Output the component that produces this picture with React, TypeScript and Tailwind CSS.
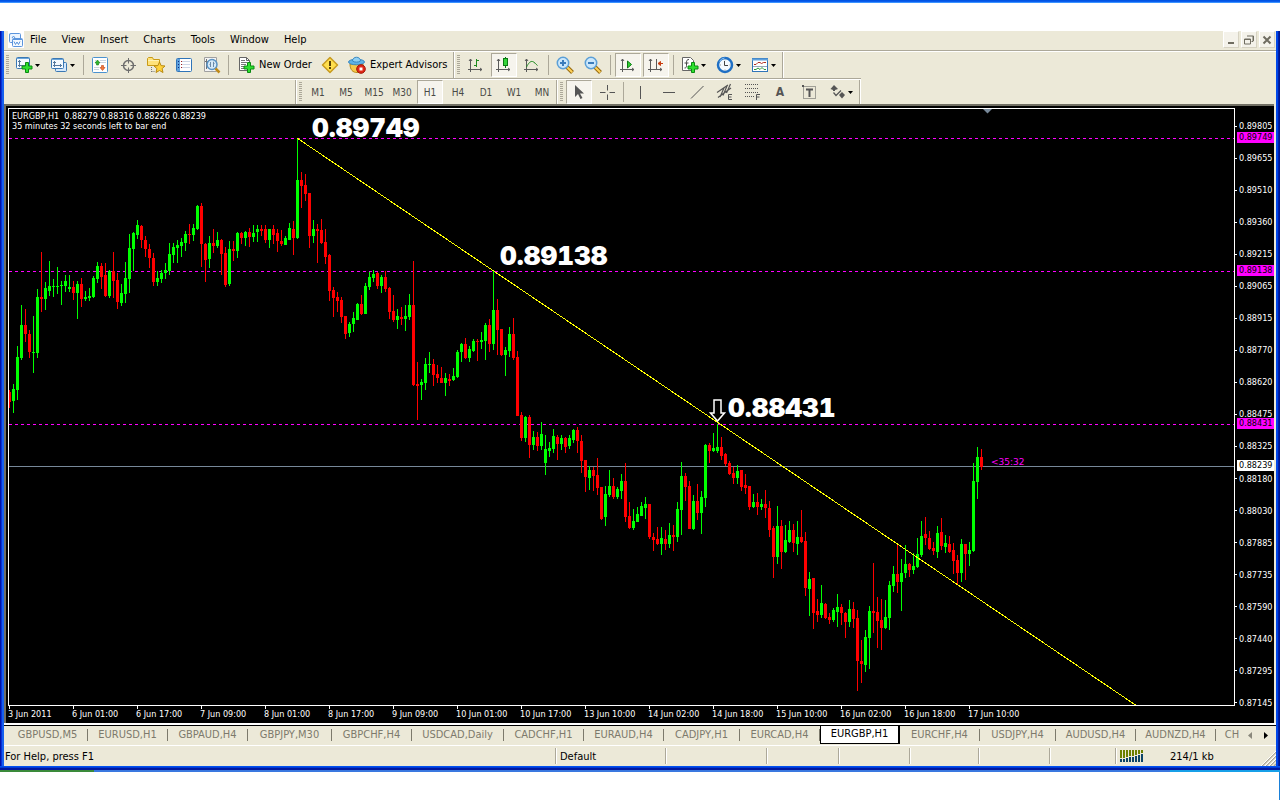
import { useState } from 'react'
import type { ReactNode } from 'react'

// [rising, high, bodyTop, bodyBottom, low] in chart pixels
type Candle = [number, number, number, number, number]

const CANDLES: Candle[] = [
  [0, 390, 392, 402, 408], [1, 384, 389, 401, 413], [1, 346, 357, 390, 400], [1, 305, 325, 358, 360], [0, 309, 325, 334, 342],
  [0, 330, 334, 352, 358], [1, 316, 352, 353, 373], [1, 289, 297, 353, 358], [0, 252, 297, 299, 312], [1, 282, 288, 299, 310],
  [1, 261, 286, 291, 296], [1, 279, 286, 287, 297], [1, 267, 286, 287, 294], [1, 281, 285, 286, 305], [1, 275, 281, 286, 292],
  [1, 275, 287, 289, 292], [0, 281, 287, 293, 300], [1, 281, 284, 293, 319], [0, 278, 284, 299, 307], [1, 291, 297, 299, 301],
  [1, 288, 296, 298, 301], [1, 276, 278, 297, 298], [1, 262, 266, 279, 283], [0, 263, 266, 277, 289], [0, 263, 275, 296, 297],
  [1, 270, 271, 296, 298], [0, 252, 271, 281, 298], [0, 273, 280, 302, 309], [1, 284, 293, 303, 306], [1, 262, 278, 294, 303],
  [1, 234, 248, 279, 293], [1, 232, 233, 249, 271], [1, 220, 225, 235, 239], [0, 225, 226, 240, 248], [0, 236, 240, 249, 257],
  [0, 244, 249, 258, 268], [0, 253, 258, 282, 286], [1, 271, 278, 282, 286], [1, 270, 273, 279, 283], [1, 263, 270, 273, 279],
  [1, 243, 254, 271, 275], [1, 243, 247, 255, 263], [1, 240, 245, 248, 263], [1, 238, 242, 246, 257], [1, 231, 234, 243, 251],
  [0, 224, 234, 235, 244], [1, 224, 228, 235, 241], [1, 205, 206, 229, 230], [0, 203, 206, 244, 267], [0, 243, 244, 260, 282],
  [1, 236, 243, 259, 268], [0, 229, 243, 246, 253], [1, 232, 240, 246, 248], [0, 239, 240, 254, 275], [0, 247, 253, 285, 287],
  [1, 241, 249, 284, 286], [0, 241, 249, 251, 261], [1, 232, 233, 251, 258], [0, 232, 233, 238, 244], [1, 231, 232, 238, 246],
  [0, 228, 232, 237, 247], [1, 225, 233, 237, 242], [1, 225, 229, 232, 242], [0, 225, 229, 231, 236], [0, 225, 229, 240, 243],
  [1, 229, 229, 240, 248], [0, 225, 229, 235, 244], [0, 229, 233, 241, 252], [0, 230, 241, 244, 246], [1, 236, 238, 245, 245],
  [1, 223, 228, 240, 240], [0, 221, 229, 238, 255], [1, 138, 180, 238, 239], [0, 172, 180, 186, 208], [0, 174, 185, 194, 201],
  [0, 193, 193, 236, 248], [1, 220, 229, 236, 243], [0, 224, 229, 231, 263], [0, 219, 230, 243, 244], [0, 229, 242, 257, 264],
  [0, 254, 255, 291, 301], [0, 287, 290, 298, 317], [0, 292, 297, 301, 312], [0, 297, 300, 317, 323], [0, 316, 316, 334, 339],
  [1, 322, 324, 333, 337], [1, 312, 318, 324, 332], [1, 303, 304, 320, 320], [0, 295, 304, 314, 315], [1, 283, 286, 314, 314],
  [1, 272, 277, 287, 290], [1, 270, 274, 278, 282], [0, 272, 273, 286, 289], [1, 275, 277, 286, 293], [0, 271, 277, 289, 292],
  [0, 287, 288, 312, 319], [0, 295, 311, 320, 322], [1, 309, 316, 320, 329], [0, 307, 317, 319, 325], [1, 305, 316, 319, 331],
  [1, 294, 305, 317, 320], [0, 261, 305, 385, 386], [0, 362, 384, 386, 420], [1, 379, 382, 385, 400], [1, 358, 364, 383, 390],
  [1, 352, 364, 365, 373], [0, 359, 364, 375, 386], [0, 365, 374, 378, 383], [0, 367, 378, 383, 383], [1, 373, 378, 383, 396],
  [0, 374, 379, 381, 386], [1, 368, 376, 380, 381], [1, 350, 352, 377, 378], [1, 343, 344, 352, 362], [0, 338, 344, 358, 359],
  [1, 346, 349, 358, 362], [1, 339, 341, 351, 352], [0, 339, 341, 342, 361], [1, 332, 340, 342, 349], [1, 323, 325, 341, 360],
  [0, 319, 325, 344, 352], [1, 271, 310, 344, 350], [0, 299, 310, 330, 355], [0, 329, 329, 355, 356], [1, 347, 350, 355, 376],
  [1, 327, 334, 351, 357], [0, 318, 334, 358, 360], [0, 351, 357, 416, 416], [0, 412, 415, 438, 441], [1, 416, 417, 438, 442],
  [0, 415, 417, 445, 458], [1, 431, 437, 445, 450], [0, 432, 437, 446, 451], [1, 422, 434, 446, 450], [1, 435, 449, 463, 475],
  [1, 442, 448, 451, 457], [1, 429, 436, 449, 453], [0, 435, 437, 444, 460], [1, 435, 438, 444, 450], [0, 437, 438, 447, 453],
  [1, 435, 438, 446, 449], [1, 429, 430, 440, 443], [0, 427, 430, 441, 453], [0, 435, 441, 461, 473], [0, 460, 460, 477, 492],
  [1, 466, 470, 478, 490], [0, 467, 470, 476, 491], [0, 458, 475, 488, 495], [0, 487, 487, 519, 520], [1, 486, 494, 517, 526],
  [1, 470, 486, 495, 497], [0, 478, 486, 497, 499], [1, 487, 489, 497, 499], [1, 474, 481, 491, 499], [0, 463, 481, 517, 522],
  [0, 502, 516, 528, 529], [1, 509, 521, 528, 530], [1, 507, 514, 522, 522], [1, 502, 506, 516, 516], [1, 497, 504, 508, 519],
  [0, 504, 504, 537, 539], [0, 533, 537, 540, 551], [0, 527, 539, 544, 545], [1, 527, 538, 544, 555], [0, 530, 539, 544, 550],
  [1, 523, 535, 544, 548], [0, 525, 535, 537, 551], [1, 502, 509, 537, 542], [1, 462, 476, 510, 535], [0, 473, 476, 487, 501],
  [0, 481, 486, 529, 529], [1, 495, 501, 529, 530], [0, 484, 501, 513, 520], [1, 491, 497, 513, 534], [1, 444, 445, 498, 507],
  [0, 443, 445, 451, 463], [1, 433, 448, 451, 452], [1, 424, 447, 451, 453], [0, 437, 447, 456, 460], [0, 453, 454, 464, 466],
  [0, 461, 463, 474, 475], [0, 467, 473, 478, 484], [1, 465, 471, 478, 484], [0, 470, 470, 487, 491], [0, 474, 485, 488, 494],
  [0, 486, 486, 507, 510], [1, 494, 502, 507, 508], [0, 493, 502, 507, 515], [1, 499, 504, 507, 510], [0, 490, 504, 508, 518],
  [0, 501, 508, 530, 537], [0, 526, 528, 557, 578], [1, 506, 526, 557, 564], [0, 520, 526, 552, 569], [1, 525, 540, 552, 553],
  [1, 521, 530, 542, 543], [0, 524, 530, 543, 552], [1, 521, 537, 544, 555], [0, 510, 537, 542, 543], [0, 532, 541, 588, 596],
  [1, 572, 579, 589, 616], [0, 578, 578, 613, 629], [0, 599, 611, 615, 622], [1, 585, 603, 615, 618], [0, 603, 604, 618, 619],
  [0, 613, 617, 620, 624], [1, 608, 610, 620, 622], [1, 594, 607, 612, 627], [0, 604, 607, 613, 625], [0, 612, 613, 622, 638],
  [1, 600, 609, 622, 627], [0, 602, 609, 619, 628], [0, 610, 618, 661, 691], [0, 640, 661, 664, 683], [1, 630, 637, 665, 672],
  [1, 606, 611, 638, 669], [0, 563, 611, 613, 633], [0, 597, 612, 621, 648], [0, 599, 620, 628, 650], [1, 600, 617, 628, 629],
  [1, 581, 585, 618, 630], [1, 566, 574, 586, 592], [0, 543, 574, 582, 593], [1, 559, 573, 582, 611], [1, 545, 564, 573, 578],
  [0, 563, 564, 570, 577], [1, 553, 566, 570, 574], [1, 538, 554, 567, 568], [1, 521, 536, 555, 557], [0, 517, 534, 538, 545],
  [0, 531, 538, 549, 550], [0, 542, 548, 551, 555], [1, 526, 533, 552, 558], [0, 518, 532, 546, 550], [1, 535, 543, 547, 553],
  [0, 536, 544, 552, 553], [0, 543, 550, 561, 574], [0, 555, 560, 573, 584], [1, 539, 544, 573, 582], [0, 544, 544, 554, 580],
  [1, 542, 550, 554, 566], [1, 463, 481, 551, 552], [1, 447, 457, 482, 499], [0, 449, 457, 467, 470],
]

const PLOT_TOP = 109

const PRICES = [
  '0.89805', '0.89655', '0.89510', '0.89360', '0.89215', '0.89065', '0.88915', '0.88770', '0.88620', '0.88475',
  '0.88325', '0.88180', '0.88030', '0.87885', '0.87735', '0.87590', '0.87440', '0.87295', '0.87145',
]

const TIMES = [
  '3 Jun 2011', '6 Jun 01:00', '6 Jun 17:00', '7 Jun 09:00', '8 Jun 01:00', '8 Jun 17:00', '9 Jun 09:00', '10 Jun 01:00',
  '10 Jun 17:00', '13 Jun 10:00', '14 Jun 02:00', '14 Jun 18:00', '15 Jun 10:00', '16 Jun 02:00', '16 Jun 18:00', '17 Jun 10:00',
]

const TABS = [
  { name: 'GBPUSD,M5', width: 'w-20' },
  { name: 'EURUSD,H1', width: 'w-20' },
  { name: 'GBPAUD,H4', width: 'w-20' },
  { name: 'GBPJPY,M30', width: 'w-[84px]' },
  { name: 'GBPCHF,H4', width: 'w-20' },
  { name: 'USDCAD,Daily', width: 'w-[92px]' },
  { name: 'CADCHF,H1', width: 'w-20' },
  { name: 'EURAUD,H4', width: 'w-20' },
  { name: 'CADJPY,H1', width: 'w-[76px]' },
  { name: 'EURCAD,H4', width: 'w-20' },
  { name: 'EURGBP,H1', width: 'w-20' },
  { name: 'EURCHF,H4', width: 'w-20' },
  { name: 'USDJPY,H4', width: 'w-[76px]' },
  { name: 'AUDUSD,H4', width: 'w-20' },
  { name: 'AUDNZD,H4', width: 'w-20' },
]

const TIMEFRAMES = ['M1', 'M5', 'M15', 'M30', 'H1', 'H4', 'D1', 'W1', 'MN']

function Icon({ children, size = 18 }: { children: ReactNode; size?: number }) {
  return (
    <svg width={size} height={size} viewBox={`0 0 ${size} ${size}`} fill="none" className="shrink-0" aria-hidden="true">
      {children}
    </svg>
  )
}

function GreenPlus() {
  return (
    <path d="M10.500 6.500h3v3.500h3.500v3h-3.500v3.500h-3v-3.500H7v-3h3.500z" fill="#2fe02f" stroke="#0a8a12" />
  )
}

function Axes() {
  return (
    <path d="M3.500 3v13M1 13.500h14M2 5l1.500-2L5 5M13 12l2 1.500L13 15" stroke="#5a5a5a" />
  )
}

function NewChartIcon() {
  return (
    <Icon>
      <rect x="1.500" y="1.500" width="13" height="11" rx="1" fill="#f4faff" stroke="#3a78b4" />
      <path d="M2 2.500h12" stroke="#6aa5da" />
      <path d="M4.500 4v7M3 9.500h8M3 5.500h3" stroke="#55789c" />
      <GreenPlus />
    </Icon>
  )
}

function ProfilesIcon() {
  return (
    <Icon>
      <rect x="5.500" y="6.500" width="11" height="9" rx="1" fill="#d5e8fa" stroke="#3a78b4" />
      <rect x="1.500" y="2.500" width="12" height="10" rx="1" fill="#f4faff" stroke="#3a78b4" />
      <path d="M2 3.500h11" stroke="#6aa5da" />
      <path d="M4.500 5v6M3 9.500h9M3 6.500h3M10.500 8v3" stroke="#55789c" />
    </Icon>
  )
}

function MarketWatchIcon() {
  return (
    <Icon>
      <rect x="1.500" y="1.500" width="15" height="15" rx="1" fill="#fff" stroke="#4b92cf" />
      <path d="M4 4.500h1M9 6.500h6M9 4.500h6M3 11.500h5M3 13.500h5" stroke="#c8d4e0" />
      <path d="M6.500 4l2.500 3H7.500v2h-2V7H4z" fill="#2fb62f" stroke="#148014" strokeWidth=".6" />
      <path d="M11.500 14.500l2.500-3h-1.500v-2h-2v2H9z" fill="#f07a3c" stroke="#c03c10" strokeWidth=".6" />
    </Icon>
  )
}

function DataWindowIcon() {
  return (
    <Icon>
      <circle cx="9.500" cy="9.500" r="5" stroke="#6e6e6e" strokeWidth="1.500" />
      <path d="M9.500 2v5.500M9.500 11.500v5.500M2 9.500h5.500M11.500 9.500h5.500" stroke="#6e6e6e" />
    </Icon>
  )
}

function NavigatorIcon() {
  return (
    <Icon>
      <path d="M.5 2.500l1-1h4l1 2h6v6H.5z" fill="#ffe27a" stroke="#c89a18" />
      <path d="M1 4.500h11" stroke="#fff3b8" />
      <path d="M4.500 11v6M4.500 15.500h4" stroke="#777" strokeDasharray="1 1" />
      <path d="M12.500 6l1.600 3.600 3.900.4-2.900 2.600.9 3.900-3.500-2-3.500 2 .9-3.900L7 10l3.900-.4z" fill="#ffd23c" stroke="#b88a10" />
    </Icon>
  )
}

function TerminalIcon() {
  return (
    <Icon>
      <rect x="1.500" y="2.500" width="15" height="13" rx="1" fill="#fff" stroke="#2f74b8" />
      <rect x="2" y="3" width="3" height="12" fill="#5ea0dc" />
      <path d="M3 5.500h1M3 8.500h1M3 11.500h1" stroke="#102a80" />
      <path d="M7 5.500h8M7 8.500h8M7 11.500h8" stroke="#ccd6e6" />
      <path d="M6 5.500h1M6 8.500h1M6 11.500h1" stroke="#a02020" />
    </Icon>
  )
}

function TesterIcon() {
  return (
    <Icon>
      <path d="M1.500 1.500h12v14h-12z" fill="#f4f4f4" stroke="#a0a0a0" />
      <path d="M3.500 3v10M10.500 3v3M2 5.500h3" stroke="#707070" />
      <circle cx="9" cy="8.500" r="5" fill="#cfe6f8" fillOpacity=".85" stroke="#5a93c4" strokeWidth="1.500" />
      <path d="M7.500 6v5M10.500 6v5M6.500 8.500h1M10.500 7.500h1" stroke="#6a8aa8" />
      <path d="M12.500 12.500l4 4" stroke="#c08a18" strokeWidth="2.500" />
    </Icon>
  )
}

function NewOrderIcon() {
  return (
    <Icon>
      <path d="M2.500 1.500h7l3 3v10h-10z" fill="#fff" stroke="#666" />
      <path d="M9.500 1.500v3h3" stroke="#666" />
      <path d="M4 4.500h4M4 6.500h6M4 8.500h5M4 10.500h4M4 12.500h4" stroke="#777" />
      <GreenPlus />
    </Icon>
  )
}

function AlertIcon() {
  return (
    <Icon>
      <path d="M9 1.500L16.500 9 9 16.500 1.500 9z" fill="#ffdf4e" stroke="#c79a20" strokeWidth="1.500" strokeLinejoin="round" />
      <path d="M9 5v5M9 11v2" stroke="#5a4308" strokeWidth="2" />
    </Icon>
  )
}

function ExpertIcon() {
  return (
    <Icon>
      <path d="M2 8c0 6 3 8.500 7 8.500s6-3 6-8.500z" fill="#f6c94a" stroke="#b88818" />
      <ellipse cx="8.500" cy="6" rx="8" ry="2.800" fill="#5fb2e6" stroke="#3a88c0" />
      <path d="M4.500 5c0-5 8-5 8 0-2 1.500-6 1.500-8 0z" fill="#8fd0f4" stroke="#3a88c0" />
      <circle cx="13" cy="13" r="4.300" fill="#e02818" stroke="#a01408" />
      <rect x="11.500" y="11.500" width="3" height="3" fill="#fff" />
    </Icon>
  )
}

function BarsIcon() {
  return (
    <Icon>
      <Axes />
      <path d="M9.500 3v8M7 9.500h2.500M9.500 4.500H12" stroke="#1e8a1e" />
    </Icon>
  )
}

function CandlesIcon() {
  return (
    <Icon>
      <Axes />
      <path d="M10.500 1v11" stroke="#0c7a14" />
      <rect x="8.500" y="2.500" width="4" height="7" fill="#35d43a" stroke="#0c7a14" />
    </Icon>
  )
}

function LineIcon() {
  return (
    <Icon>
      <Axes />
      <path d="M3.500 11c2-4 4-6 6-5.500 2 .5 3 2.500 5 4" stroke="#1e8a1e" />
    </Icon>
  )
}

function ZoomIcon({ plus }: { plus: boolean }) {
  return (
    <Icon>
      <path d="M11 11l5.500 5.500" stroke="#96690c" strokeWidth="4" />
      <path d="M11 11l5.200 5.200" stroke="#ffd25a" strokeWidth="2" />
      <circle cx="7" cy="7" r="5.700" fill="#cbe7fb" stroke="#5b9fd6" strokeWidth="1.500" />
      <path d={plus ? 'M7 4v6M4 7h6' : 'M4 7h6'} stroke="#3a7cbc" strokeWidth="2" />
    </Icon>
  )
}

function AutoScrollIcon() {
  return (
    <Icon>
      <Axes />
      <path d="M8.500 5v7l4-3.500z" fill="#2fd02f" stroke="#0c7a14" />
    </Icon>
  )
}

function ChartShiftIcon() {
  return (
    <Icon>
      <Axes />
      <path d="M9.500 3v10" stroke="#5a5a5a" />
      <path d="M11 7.500h5M13.500 5.500v4L11 7.500z" fill="#c83c10" stroke="#c83c10" />
    </Icon>
  )
}

function IndicatorsIcon() {
  return (
    <Icon>
      <path d="M1.500 1.500h8l3 3v10h-11z" fill="#fff" stroke="#666" />
      <path d="M8 3.500c-2 0-2.500 1-2.500 3v3c0 2-.5 2.500-2 2.500M3.500 7h4" stroke="#444" />
      <GreenPlus />
    </Icon>
  )
}

function ClockIcon() {
  return (
    <Icon>
      <circle cx="9" cy="9" r="7" fill="#f6fbff" stroke="#1f6fc4" strokeWidth="2.500" />
      <path d="M3.500 5.500a6.500 6.500 0 015-3.500" stroke="#8cc4f4" />
      <path d="M8.500 5v4.500H12" stroke="#444" />
      <path d="M9 3.500v.8M9 13.500v1M4 9h1M13.500 9h1" stroke="#999" />
    </Icon>
  )
}

function TemplatesIcon() {
  return (
    <Icon>
      <rect x="1.500" y="2.500" width="15" height="13" fill="#fff" stroke="#2f74b8" />
      <path d="M1 3.500h16" stroke="#5ea0dc" strokeWidth="2" />
      <path d="M3 8.500h2l2-2h2l1.500 1 2-1H15" stroke="#b03020" />
      <path d="M2 10.500h14" stroke="#9ab" />
      <path d="M3 13.500h2l2-1.500 2 1.500 2-2 2 2h2" stroke="#2a9a3a" />
    </Icon>
  )
}

function DropArrow() {
  return (
    <svg width="5" height="3" viewBox="0 0 5 3" className="shrink-0" aria-hidden="true">
      <path d="M0 0h5L2.500 3z" fill="#000" />
    </svg>
  )
}

interface ToolButtonProps {
  label: string
  pressed?: boolean
  onClick?: () => void
  children: ReactNode
}

function ToolButton({ label, pressed = false, onClick, children }: ToolButtonProps) {
  return (
    <button
      type="button"
      aria-label={label}
      aria-pressed={pressed}
      onClick={onClick}
      className={
        pressed
          ? 'mx-px flex h-6 w-[26px] shrink-0 items-center justify-center border border-t-[#aca899] border-r-white border-b-white border-l-[#aca899] bg-[#f6f4ed]'
          : 'flex h-6 w-7 shrink-0 items-center justify-center'
      }
    >
      {children}
    </button>
  )
}

function DropButton({ label, children }: { label: string; children: ReactNode }) {
  return (
    <button type="button" aria-label={label} className="flex h-6 w-[35px] shrink-0 items-center gap-0.5 pl-1">
      {children}
      <DropArrow />
    </button>
  )
}

function Grip() {
  return (
    <div className="flex w-[7px] shrink-0 items-center justify-center">
      <div className="h-5 w-[3px] bg-[repeating-linear-gradient(to_bottom,#aca899_0_1px,transparent_1px_2px)]" />
    </div>
  )
}

function Separator({ wide = false }: { wide?: boolean }) {
  return (
    <div className={`${wide ? 'w-[7px]' : 'w-[5px]'} flex shrink-0 items-center justify-center`}>
      <div className="h-5 w-px bg-[#aca899]" />
    </div>
  )
}

function BandEdge() {
  return <div className="w-0.5 shrink-0 self-stretch border-r border-l border-r-white border-l-[#aca899]" />
}

function MenuBar() {
  return (
    <div className="flex h-[21px] shrink-0 items-start border-b border-[#fff] shadow-[inset_0_-1px_0_#aca899]">
      <div className="ml-1 flex h-[17px] w-4 items-center justify-center bg-white">
        <Icon size={16}>
          <rect x="1.500" y="1.500" width="11" height="9" rx="1" fill="#eaf4ff" stroke="#5a94dc" />
          <path d="M1.500 3l1-1.500M4 6l1.500-2L7 6" stroke="#5a94dc" />
          <rect x="4.500" y="6.500" width="10" height="8" rx="1" fill="#f4faff" stroke="#5a94dc" />
          <path d="M5 7.500h9M6 9.500l1.500 3L9 10l1.500 2.500 1.500-3" stroke="#5a94dc" />
        </Icon>
      </div>
      <nav className="flex h-[18px] items-center gap-[15px] pl-1.5 text-[11px]">
        {['File', 'View', 'Insert', 'Charts', 'Tools', 'Window', 'Help'].map((item) => (
          <button key={item} type="button">
            {item}
          </button>
        ))}
      </nav>
      <div className="ml-auto flex gap-0.5 pr-px">
        {['Minimize', 'Restore', 'Close'].map((name) => (
          <button
            key={name}
            type="button"
            aria-label={name}
            className="flex h-[17px] w-4 items-center justify-center border border-t-white border-r-[#d6d2c2] border-b-[#d6d2c2] border-l-white bg-[#f4f2ea]"
          >
            <Icon size={10}>
              {name === 'Minimize' && <path d="M2 8h6" stroke="#6f6c60" strokeWidth="2" />}
              {name === 'Restore' && (
                <path d="M3 1h6.500V6M9 1v5.500H7.500M.5 4h6v5h-6zM.5 4.500h6" stroke="#6f6c60" />
              )}
              {name === 'Close' && <path d="M1.500 1.500l7 7M8.500 1.500l-7 7" stroke="#6f6c60" strokeWidth="2" />}
            </Icon>
          </button>
        ))}
      </div>
    </div>
  )
}

function StandardToolbar() {
  return (
    <div className="flex h-[27px] shrink-0">
      <div className="flex w-[857px] items-center border-b border-[#aca899]">
        <Grip />
        <DropButton label="New chart"><NewChartIcon /></DropButton>
        <DropButton label="Profiles"><ProfilesIcon /></DropButton>
        <Separator />
        <ToolButton label="Market Watch"><MarketWatchIcon /></ToolButton>
        <ToolButton label="Data Window"><DataWindowIcon /></ToolButton>
        <ToolButton label="Navigator"><NavigatorIcon /></ToolButton>
        <ToolButton label="Terminal"><TerminalIcon /></ToolButton>
        <ToolButton label="Strategy Tester"><TesterIcon /></ToolButton>
        <Separator />
        <button type="button" className="flex h-6 w-[85px] items-center gap-1 pl-1.5 text-[11px] whitespace-nowrap">
          <NewOrderIcon />
          New Order
        </button>
        <ToolButton label="MetaEditor"><AlertIcon /></ToolButton>
        <button type="button" className="flex h-6 w-[109px] items-center gap-1 pl-1 text-[11px] whitespace-nowrap">
          <ExpertIcon />
          Expert Advisors
        </button>
        <BandEdge />
        <Grip />
        <ToolButton label="Bar chart"><BarsIcon /></ToolButton>
        <ToolButton label="Candlesticks" pressed><CandlesIcon /></ToolButton>
        <ToolButton label="Line chart"><LineIcon /></ToolButton>
        <Separator />
        <ToolButton label="Zoom in"><ZoomIcon plus /></ToolButton>
        <ToolButton label="Zoom out"><ZoomIcon plus={false} /></ToolButton>
        <Separator wide />
        <ToolButton label="Auto scroll" pressed><AutoScrollIcon /></ToolButton>
        <ToolButton label="Chart shift" pressed><ChartShiftIcon /></ToolButton>
        <Separator wide />
        <DropButton label="Indicators"><IndicatorsIcon /></DropButton>
        <DropButton label="Periods"><ClockIcon /></DropButton>
        <DropButton label="Templates"><TemplatesIcon /></DropButton>
        <BandEdge />
      </div>
    </div>
  )
}

function DrawingToolbar() {
  const [frame, setFrame] = useState('H1')

  return (
    <div className="flex h-[25px] shrink-0 items-center">
      <div className="flex w-[857px] items-center self-stretch border-t border-white">
        <div className="w-[291px] shrink-0" />
        <BandEdge />
        <Grip />
        {TIMEFRAMES.map((tf) => (
          <ToolButton key={tf} label={tf} pressed={tf === frame} onClick={() => setFrame(tf)}>
            <span className="text-[10px] text-[#4a4a46]">{tf}</span>
          </ToolButton>
        ))}
        <BandEdge />
        <Grip />
        <ToolButton label="Cursor" pressed>
          <Icon>
            <path d="M5 2v12l3-3 2.500 5 2-1-2.500-4.500H14z" fill="#555" />
          </Icon>
        </ToolButton>
        <ToolButton label="Crosshair">
          <Icon>
            <path d="M9.500 2v5.500M9.500 11.500v5.500M2 9.500h5.500M11.500 9.500h5.500" stroke="#555" />
          </Icon>
        </ToolButton>
        <Separator />
        <ToolButton label="Vertical line">
          <Icon><path d="M9.500 3v13" stroke="#555" /></Icon>
        </ToolButton>
        <ToolButton label="Horizontal line">
          <Icon><path d="M4 9.500h12" stroke="#555" /></Icon>
        </ToolButton>
        <ToolButton label="Trendline">
          <Icon><path d="M4 15.500L16.500 3" stroke="#555" /></Icon>
        </ToolButton>
        <ToolButton label="Equidistant channel">
          <Icon>
            <path d="M2 9.500L13 2M3 14.500L16 5M5 14L9 5M8 12.500L12 3M11.500 10L15.500 1" stroke="#555" strokeWidth="1.200" />
            <path d="M17 11.500h-3.500v5H17M13.500 14h3" stroke="#555" />
          </Icon>
        </ToolButton>
        <ToolButton label="Fibonacci retracement">
          <Icon>
            <path d="M2 1.500h14M2 5.500h14M2 9.500h14M2 13.500h9" stroke="#555" strokeDasharray="1 1" />
            <path d="M17 11.500h-3.500V17M13.500 14h3" stroke="#555" />
          </Icon>
        </ToolButton>
        <ToolButton label="Text">
          <span className="text-xs font-bold text-[#555]">A</span>
        </ToolButton>
        <ToolButton label="Text label">
          <Icon>
            <rect x="4.500" y="3.500" width="12" height="12" stroke="#555" strokeDasharray="1 1" />
            <path d="M3 2h2v2H3z" fill="#555" />
            <path d="M7 6.500h7M10.500 6.500V14" stroke="#555" strokeWidth="2" />
          </Icon>
        </ToolButton>
        <div className="ml-auto flex items-center self-stretch">
          <DropButton label="Arrows">
            <Icon>
              <path d="M6 2l4 4-3 1v1H5V7L2.500 6z" fill="#555" />
              <path d="M5.500 9.500l2.500 3 5-5" stroke="#555" strokeWidth="1.200" />
              <path d="M14 9l3 3-3 3.500-3-3.500z" fill="#555" />
            </Icon>
          </DropButton>
          <BandEdge />
        </div>
      </div>
    </div>
  )
}

function PriceLine({ y }: { y: number }) {
  return <line x1="0" x2="100%" y1={y} y2={y} stroke="#ff00ff" strokeDasharray="3 3" shapeRendering="crispEdges" />
}

function Plot() {
  return (
    <svg className="block h-full w-full" role="img" aria-label="EURGBP hourly candlestick chart">
      <PriceLine y={29.5} />
      <PriceLine y={162.5} />
      <PriceLine y={315.5} />
      <line x1="0" x2="100%" y1="357.500" y2="357.500" stroke="#778899" shapeRendering="crispEdges" />

      {/* Candles, one every 4px */}
      <g shapeRendering="crispEdges">
        {CANDLES.map(([up, high, top, bottom, low], i) => {
          const color = up ? '#00ff00' : '#ff0000'
          return (
            <g key={i} fill={color}>
              <rect x={i * 4} y={high - PLOT_TOP} width="1" height={low - high} />
              <rect x={i * 4 - 1} y={top - PLOT_TOP} width="3" height={bottom - top} />
            </g>
          )
        })}
      </g>

      {/* Trend line */}
      <line x1="288" y1="29" x2="1128" y2="597" stroke="#ffff00" shapeRendering="crispEdges" />

      <path d="M974 0h9l-4.500 4.500z" fill="#778899" />
      <path d="M705 291h7v13h3.500L708.500 312 701.500 304H705z" fill="#000" stroke="#fff" strokeWidth="1.500" />

      <g className="fill-white font-['Inter','DejaVu_Sans'] text-[26px] font-black tabular-nums">
        <text x="303" y="28">0.89749</text>
        <text x="491" y="156">0.89138</text>
        <text x="719" y="308">0.88431</text>
      </g>
      <text x="982" y="356" className="fill-[#ff00ff] font-['DejaVu_Sans'] text-[9px]">
        &lt;35:32
      </text>
    </svg>
  )
}

function Chart() {
  return (
    <div className="mr-0.5 flex min-h-0 flex-1 flex-col border-t-2 border-l-2 border-[#716f64] bg-black pt-0.5 pl-0.5 text-[9px] leading-[10px] text-white">
      <div className="flex min-h-0 flex-1">
        <div className="relative min-w-0 flex-1 overflow-hidden border border-white">
          <Plot />
          <div className="absolute top-0.5 left-[3px] whitespace-pre">
            <p>EURGBP,H1  0.88279 0.88316 0.88226 0.88239</p>
            <p>35 minutes 32 seconds left to bar end</p>
          </div>
        </div>
        <div className="relative w-[39px] shrink-0">
          <ul className="flex h-[calc(100%+2px)] flex-col justify-between pt-[13px]">
            {PRICES.map((price) => (
              <li key={price} className="flex h-2.5 items-center gap-0.5">
                <span className="h-px w-0.5 bg-white" />
                {price}
              </li>
            ))}
          </ul>
          <span className="absolute top-6 left-0.5 h-[11px] w-[37px] bg-[#ff00ff] pl-0.5 text-black">0.89749</span>
          <span className="absolute top-[157px] left-0.5 h-[11px] w-[37px] bg-[#ff00ff] pl-0.5 text-black">0.89138</span>
          <span className="absolute top-[310px] left-0.5 h-[11px] w-[37px] bg-[#ff00ff] pl-0.5 text-black">0.88431</span>
          <span className="absolute top-[352px] left-0.5 h-[11px] w-[37px] bg-white pl-0.5 text-black">0.88239</span>
        </div>
      </div>
      <ol className="flex h-[17px] shrink-0 overflow-hidden">
        {TIMES.map((time) => (
          <li key={time} className="w-16 shrink-0 whitespace-nowrap">
            <span className="ml-px block h-[3px] w-px bg-white" />
            <span className="block">{time}</span>
          </li>
        ))}
      </ol>
    </div>
  )
}

function ChartTabs() {
  const [active, setActive] = useState('EURGBP,H1')

  return (
    <div className="flex h-[23px] shrink-0 border-t-2 border-b border-white">
      <div className="flex min-w-0 flex-1 items-start border-t border-black pl-1 text-[11px]">
        <div role="tablist" className="flex min-w-0 flex-1 overflow-hidden">
          {TABS.map((tab) => (
            <button
              key={tab.name}
              type="button"
              role="tab"
              aria-selected={tab.name === active}
              onClick={() => setActive(tab.name)}
              className={`${tab.width} flex h-[18px] shrink-0 items-center justify-center ${
                tab.name === active ? 'border-r-2 border-b border-l border-black bg-white text-black' : 'text-[#7d7a6c]'
              }`}
            >
              <span className="flex-1">{tab.name}</span>
              {tab.name !== active && <span className="h-3 w-px bg-[#7d7a6c]" />}
            </button>
          ))}
          <button type="button" role="tab" aria-selected={false} className="h-[18px] w-6 shrink-0 pl-2 text-[#7d7a6c]">
            CH
          </button>
        </div>
        <div className="flex h-[18px] w-9 shrink-0 items-center justify-between px-2">
          <button type="button" aria-label="Scroll left">
            <Icon size={7}><path d="M4 0v7L0 3.500z" fill="#8a887c" /></Icon>
          </button>
          <button type="button" aria-label="Scroll right">
            <Icon size={7}><path d="M3 0v7l4-3.500z" fill="#000" /></Icon>
          </button>
        </div>
      </div>
    </div>
  )
}

function StatusCell({ width, children }: { width: string; children?: ReactNode }) {
  return (
    <div className={`${width} flex h-4 shrink-0 items-center border-l border-[#aca899] pl-1 shadow-[inset_1px_0_0_#fff]`}>
      {children}
    </div>
  )
}

function StatusBar() {
  return (
    <footer className="flex h-5 shrink-0 items-center text-[11px]">
      <div className="min-w-0 flex-1 pt-0.5 pl-px">For Help, press F1</div>
      <StatusCell width="w-[110px]"><span className="pt-0.5">Default</span></StatusCell>
      <StatusCell width="w-[101px]" />
      <StatusCell width="w-[72px]" />
      <StatusCell width="w-[71px]" />
      <StatusCell width="w-[69px]" />
      <StatusCell width="w-[71px]" />
      <StatusCell width="w-[66px]" />
      <StatusCell width="w-[146px]">
        <svg width="24" height="12" viewBox="0 0 24 12" shapeRendering="crispEdges" aria-hidden="true">
          {[9, 9, 8, 7, 7, 6, 5, 4].map((split, i) => (
            <g key={i}>
              <rect x={i * 3} y="0" width="2" height={split - 1} fill="#6b7f00" />
              <rect x={i * 3} y={split} width="2" height={12 - split} fill="#0c4468" />
            </g>
          ))}
        </svg>
        <span className="pt-0.5 pl-[26px]">214/1 kb</span>
      </StatusCell>
      <svg width="15" height="15" viewBox="0 0 15 15" className="shrink-0 self-end" aria-hidden="true">
        <path d="M1 15L15 1M5 15L15 5M9 15l6-6M13 15l2-2" stroke="#aca899" strokeWidth="1.500" />
        <path d="M0 15L15 0M4 15L15 4M8 15l7-7" stroke="#fff" />
      </svg>
    </footer>
  )
}

export default function App() {
  return (
    <div className="flex h-screen flex-col overflow-hidden bg-white font-['DejaVu_Sans_Condensed','DejaVu_Sans',sans-serif] text-black">
      <div className="h-[3px] shrink-0 bg-[linear-gradient(to_bottom,#0054e3_0_1px,#0a5cee_1px_2px,#3a93ff_2px)]" />
      <div className="h-7 shrink-0" />
      <div className="flex min-h-0 flex-1">
        <div className="w-1 shrink-0 bg-[linear-gradient(to_right,#0014a8_0_1px,#0831d9_1px_2px,#1660ee_2px)]" />
        <main className="flex min-w-0 flex-1 flex-col bg-[#ece9d8]">
          <MenuBar />
          <StandardToolbar />
          <DrawingToolbar />
          <Chart />
          <ChartTabs />
          <StatusBar />
        </main>
        <div className="w-1 shrink-0 bg-[linear-gradient(to_right,#0046e8_0_2px,#0020a8_2px_3px,#001590_3px)]" />
      </div>
      <div className="h-1 shrink-0 bg-[linear-gradient(to_bottom,#0050f0_0_1px,#003cd8_1px_2px,#0018a0_2px)]" />
      {/* Sliver of the taskbar */}
      <div className="flex h-0.5 shrink-0">
        <div className="w-[94px] bg-[#3a8a3a]" />
        <div className="flex-1 bg-[#3a78e0]" />
        <div className="w-[110px] bg-[#18a0e8]" />
      </div>
      <div className="h-7 shrink-0 border-r border-[#1a80d8]" />
    </div>
  )
}
